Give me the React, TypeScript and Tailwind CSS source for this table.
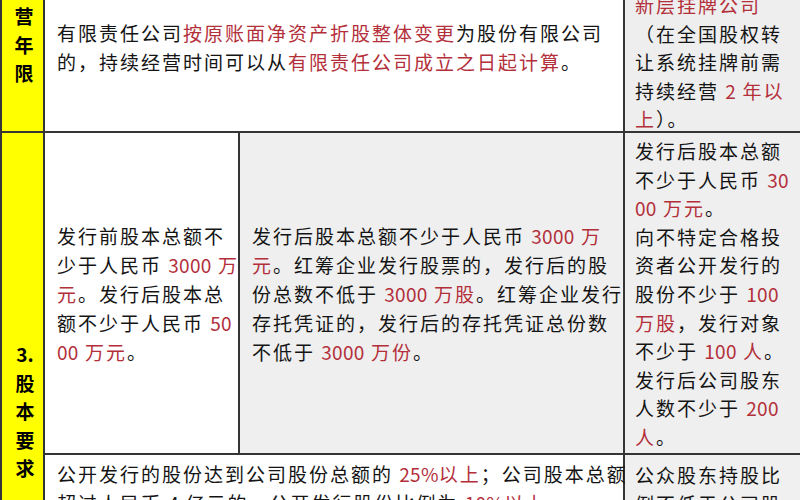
import type { ReactNode } from 'react';

// {…} marks the red runs of text
const topText = ['有限责任公司{按原账面净资产折股整体变更}为股份有限公司', '的，持续经营时间可以从{有限责任公司成立之日起计算}。'];

const topSide = ['{新层挂牌公司}', '（在全国股权转', '让系统挂牌前需', '持续经营 {2 年以}', '{上}）。'];

const mainLeft = ['发行前股本总额不', '少于人民币 {3000 万}', '{元}。发行后股本总', '额不少于人民币 {50}', '{00 万元}。'];

const mainMid = [
  '发行后股本总额不少于人民币 {3000 万}',
  '{元}。红筹企业发行股票的，发行后的股',
  '份总数不低于 {3000 万股}。红筹企业发行',
  '存托凭证的，发行后的存托凭证总份数',
  '不低于 {3000 万份}。',
];

const mainSide = [
  '发行后股本总额',
  '不少于人民币 {30}',
  '{00 万元}。',
  '向不特定合格投',
  '资者公开发行的',
  '股份不少于 {100}',
  '{万股}，发行对象',
  '不少于 {100 人}。',
  '发行后公司股东',
  '人数不少于 {200}',
  '{人}。',
];

const bottomText = ['公开发行的股份达到公司股份总额的 {25%以上}；公司股本总额', '超过人民币 4 亿元的，公开发行股份比例为 {10%以上}。'];

const bottomSide = ['公众股东持股比', '例不低于公司股'];

function Line({ src }: { src: string }) {
  const parts = src.split(/(\{[^}]*\})/).filter(Boolean);
  return (
    <div className="whitespace-pre">
      {parts.map((p, i) => {
        const red = p.startsWith('{');
        const text = red ? p.slice(1, -1) : p;
        return (
          <span key={i} className={red ? 'text-[#b3303b]' : undefined}>
            {text.split(/([0-9%]+)/).map((q, j) =>
              /^[0-9%]+$/.test(q) ? (
                <span key={j} className="tracking-[0.3px]">
                  {q}
                </span>
              ) : (
                q
              ),
            )}
          </span>
        );
      })}
    </div>
  );
}

function Lines({ lines }: { lines: string[] }) {
  return (
    <>
      {lines.map((l, i) => (
        <Line key={i} src={l} />
      ))}
    </>
  );
}

function Label({ chars, className }: { chars: string[]; className?: string }): ReactNode {
  return (
    <div className={`flex flex-col items-center bg-[#ffff00] pl-[5px] text-[19px] leading-[28.5px] font-bold text-black overflow-hidden ${className ?? ''}`}>
      {chars.map((c) => (
        <div key={c}>{c}</div>
      ))}
    </div>
  );
}

export default function App() {
  return (
    <div className="h-[500px] w-[800px] overflow-hidden bg-white font-['Noto_Sans_CJK_SC','Noto_Sans_CJK_JP',sans-serif] text-[19px] leading-[29px] tracking-[2px] text-[#141414]">
      <div className="grid grid-cols-[41px_193px_383px_175px] grid-rows-[131px_320px_120px] gap-[2px] bg-[#353535] pl-[2px]">
        <Label chars={['营', '年', '限']} className="pt-[2px]" />
        <div className="col-span-2 bg-white pl-[12px] pt-[18px]">
          <Lines lines={topText} />
        </div>
        <div className="overflow-hidden bg-[#eeeeee] pl-[10px] leading-[28.5px]">
          <div className="-mt-[9px]">
            <Lines lines={topSide} />
          </div>
        </div>

        <Label chars={['3.', '股', '本', '要', '求']} className="row-span-2 pt-[207px] tracking-normal" />
        <div className="flex flex-col justify-center bg-white pl-[12px]">
          <Lines lines={mainLeft} />
        </div>
        <div className="flex flex-col justify-center bg-[#efefef] pl-[12px]">
          <Lines lines={mainMid} />
        </div>
        <div className="overflow-hidden bg-[#efefef] pl-[10px] pt-[4px] leading-[28.6px]">
          <Lines lines={mainSide} />
        </div>

        <div className="col-span-2 bg-white pl-[12px] pt-[4px]">
          <Lines lines={bottomText} />
        </div>
        <div className="bg-[#f0f0f0] pl-[10px] pt-[5px]">
          <Lines lines={bottomSide} />
        </div>
      </div>
    </div>
  );
}
